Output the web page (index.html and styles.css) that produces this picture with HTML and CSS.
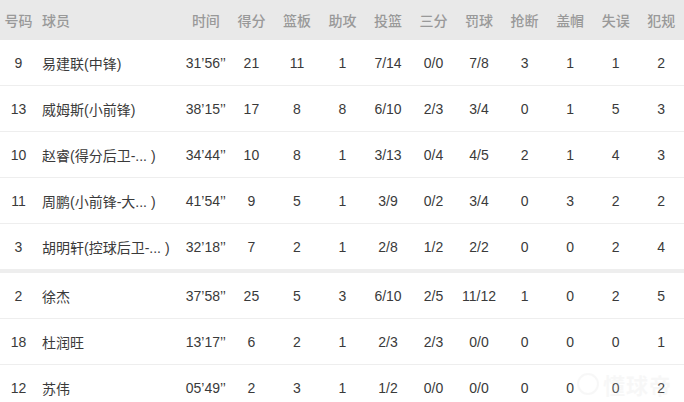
FILE: index.html
```html
<!DOCTYPE html>
<html lang="zh">
<head>
<meta charset="utf-8">
<link rel="stylesheet" href="styles.css">
</head>
<body>
<div class="wrap">
<table class="stats">
  <colgroup>
    <col class="c-num"><col class="c-name">
    <col class="c-stat"><col class="c-stat"><col class="c-stat"><col class="c-stat"><col class="c-stat"><col class="c-stat"><col class="c-stat"><col class="c-stat"><col class="c-stat"><col class="c-stat"><col class="c-stat">
  </colgroup>
  <thead>
    <tr><th>号码</th><th class="name">球员</th><th>时间</th><th>得分</th><th>篮板</th><th>助攻</th><th>投篮</th><th>三分</th><th>罚球</th><th>抢断</th><th>盖帽</th><th>失误</th><th>犯规</th></tr>
  </thead>
  <tbody>
    <tr><td>9</td><td class="name">易建联(中锋)</td><td>31’56’’</td><td>21</td><td>11</td><td>1</td><td>7/14</td><td>0/0</td><td>7/8</td><td>3</td><td>1</td><td>1</td><td>2</td></tr>
    <tr><td>13</td><td class="name">威姆斯(小前锋)</td><td>38’15’’</td><td>17</td><td>8</td><td>8</td><td>6/10</td><td>2/3</td><td>3/4</td><td>0</td><td>1</td><td>5</td><td>3</td></tr>
    <tr><td>10</td><td class="name">赵睿(得分后卫-... )</td><td>34’44’’</td><td>10</td><td>8</td><td>1</td><td>3/13</td><td>0/4</td><td>4/5</td><td>2</td><td>1</td><td>4</td><td>3</td></tr>
    <tr><td>11</td><td class="name">周鹏(小前锋-大... )</td><td>41’54’’</td><td>9</td><td>5</td><td>1</td><td>3/9</td><td>0/2</td><td>3/4</td><td>0</td><td>3</td><td>2</td><td>2</td></tr>
    <tr class="last-starter"><td>3</td><td class="name">胡明轩(控球后卫-... )</td><td>32’18’’</td><td>7</td><td>2</td><td>1</td><td>2/8</td><td>1/2</td><td>2/2</td><td>0</td><td>0</td><td>2</td><td>4</td></tr>
  </tbody>
  <tbody class="bench">
    <tr><td>2</td><td class="name">徐杰</td><td>37’58’’</td><td>25</td><td>5</td><td>3</td><td>6/10</td><td>2/5</td><td>11/12</td><td>1</td><td>0</td><td>2</td><td>5</td></tr>
    <tr><td>18</td><td class="name">杜润旺</td><td>13’17’’</td><td>6</td><td>2</td><td>1</td><td>2/3</td><td>2/3</td><td>0/0</td><td>0</td><td>0</td><td>0</td><td>1</td></tr>
    <tr><td>12</td><td class="name">苏伟</td><td>05’49’’</td><td>2</td><td>3</td><td>1</td><td>1/2</td><td>0/0</td><td>0/0</td><td>0</td><td>0</td><td>0</td><td>2</td></tr>
  </tbody>
</table>
<div class="watermark"><span class="wm-logo"></span><span class="wm-text">懂球帝</span></div>
</div>
</body>
</html>
```
FILE: styles.css
```css
html, body {
  margin: 0;
  padding: 0;
  background: #fff;
}
.wrap {
  position: relative;
  width: 684px;
  height: 402px;
  overflow: hidden;
}
.stats {
  width: 684px;
  border-collapse: collapse;
  table-layout: fixed;
  font-family: "Liberation Sans", "Noto Sans CJK SC", sans-serif;
  font-size: 14px;
  color: #3a3a3a;
}
.c-num { width: 37px; }
.c-name { width: 146px; }
.c-stat { width: 45.5px; }
.stats th {
  height: 40px;
  padding: 0;
  background: #e9e9e9;
  color: #999;
  font-family: "Noto Sans CJK SC", sans-serif;
  font-weight: 500;
  text-align: center;
  white-space: nowrap;
}
.stats td {
  height: 45px;
  padding: 0;
  text-align: center;
  border-bottom: 1px solid #eeeeee;
  white-space: nowrap;
}
.stats .name {
  text-align: left;
  padding-left: 5px;
}
.stats .last-starter td {
  border-bottom: 4px solid #eeeeee;
}
.bench tr:last-child td {
  border-bottom: none;
}
.watermark {
  position: absolute;
  left: 577px;
  top: 368px;
  display: flex;
  align-items: center;
  gap: 4px;
  opacity: 0.18;
  pointer-events: none;
}
.wm-logo {
  width: 22px;
  height: 22px;
  border: 2px solid #d8d8d8;
  border-radius: 50%;
  box-sizing: border-box;
}
.wm-text {
  font-family: "Noto Sans CJK SC", sans-serif;
  font-size: 22px;
  font-weight: 700;
  color: #d8d8d8;
  letter-spacing: 1px;
}
```
